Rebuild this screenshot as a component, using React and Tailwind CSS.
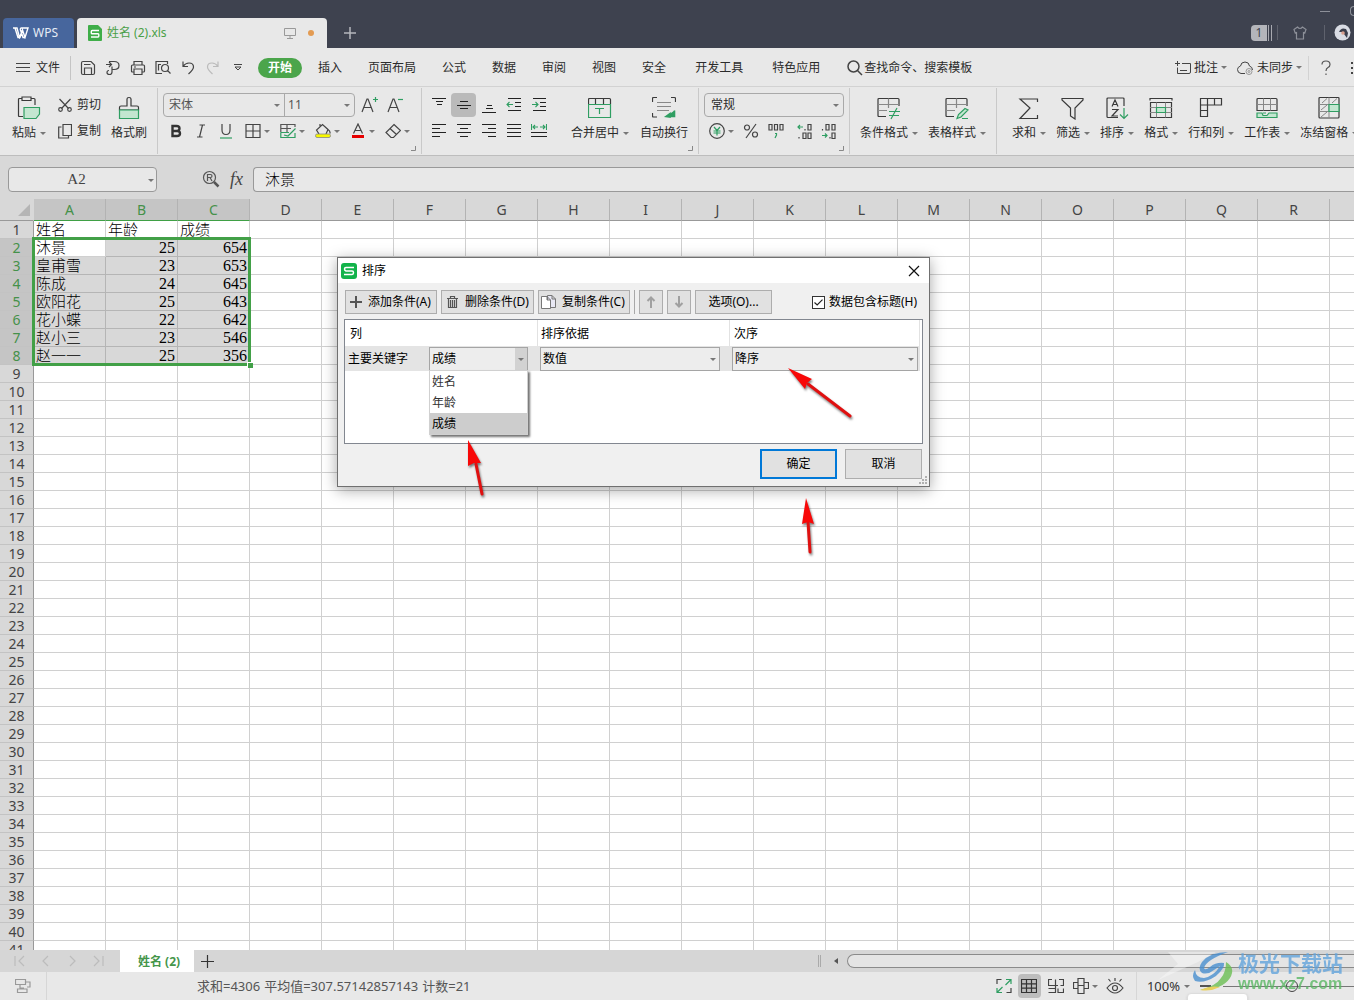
import React from 'react';

const COLUMNS = 'ABCDEFGHIJKLMNOPQR'.split('');
const ROWS = Array.from({ length: 41 }, (_, i) => i + 1);

const DATA = [
  ['姓名', '年龄', '成绩'],
  ['沐景', 25, 654],
  ['皇甫雪', 23, 653],
  ['陈成', 24, 645],
  ['欧阳花', 25, 643],
  ['花小蝶', 22, 642],
  ['赵小三', 23, 546],
  ['赵一一', 25, 356],
];

const GREEN = '#2f9e62';
const PALE = '#c3e6d0';

function Icon({ w = 16, h = 16, color = '#444', sw = 1.2, className, children }) {
  return (
    <svg
      width={w}
      height={h}
      viewBox={`0 0 ${w} ${h}`}
      fill="none"
      stroke={color}
      strokeWidth={sw}
      className={`shrink-0 ${className || ''}`}
      aria-hidden="true"
    >
      {children}
    </svg>
  );
}

function Caret({ className }) {
  return (
    <svg width="6" height="3" viewBox="0 0 6 3" className={`shrink-0 ${className || ''}`} aria-hidden="true">
      <path d="M0 0H6L3 3Z" fill="#777" />
    </svg>
  );
}

function IconButton({ label, className, children }) {
  return (
    <button aria-label={label} className={`flex h-6 w-[25px] shrink-0 items-center justify-center ${className || ''}`}>
      {children}
    </button>
  );
}

function CaretButton({ label, children }) {
  return (
    <button aria-label={label} className="flex h-6 shrink-0 items-center gap-[3px]">
      {children}
      <Caret />
    </button>
  );
}

function RibbonButton({ icon, label, caret = true }) {
  return (
    <button className="flex shrink-0 flex-col items-center gap-1 pt-2">
      {icon}
      <span className="flex h-[18px] items-center gap-1 whitespace-nowrap">
        {label}
        {caret && <Caret />}
      </span>
    </button>
  );
}

function RibbonGroup({ className, corner, children }) {
  return (
    <div className={`relative flex shrink-0 items-start border-r border-[#c9c9c9] ${className}`}>
      {children}
      {corner && (
        <Icon w={5} h={5} color="#888" sw={1} className="absolute right-[5px] bottom-[3px]">
          <path d="M4.5 0V4.5H0" />
        </Icon>
      )}
    </div>
  );
}

function Combo({ label, value, options, className, caretClass = 'right-1' }) {
  return (
    <div className={`relative ${className}`}>
      <select aria-label={label} defaultValue={value} className="h-full w-full appearance-none bg-transparent outline-none">
        {(options || [value]).map((o) => (
          <option key={o}>{o}</option>
        ))}
      </select>
      <Caret className={`pointer-events-none absolute top-1/2 -mt-px ${caretClass}`} />
    </div>
  );
}

/* ---------- title bar ---------- */

function TitleBar() {
  return (
    <header className="flex h-12 shrink-0 items-end overflow-hidden bg-[#3e424f] pl-[3px]">
      <button className="flex h-[30px] w-[71px] items-center gap-1 rounded-t bg-[#47669d] pl-[10px] text-[#e6ecf6]">
        <Icon w={16} h={12} color="#fff" sw={1.4}>
          <path d="M0 1H4L6.500 10.500L9 4.500M2 1L5 10.500H7L9.500 3L12 10.500L15 1H8.500Q7 1 7.500 3L10 10.500H12" />
        </Icon>
        WPS
      </button>
      <div className="ml-[3px] flex h-[30px] w-[250px] items-center rounded-t bg-[#e8e8e8] pr-[13px] pl-[11px]">
        <Icon w={14} h={16} color="#fff" sw={1.4}>
          <path d="M1 0H10L14 4V15Q14 16 13 16H1Q0 16 0 15V1Q0 0 1 0Z" fill="#3fae49" stroke="none" />
          <path d="M11 5.500H4.200Q3.300 5.500 3.300 6.500V8Q3.300 8.800 4.200 8.800H10Q10.800 8.800 10.800 9.700V11Q10.800 12 10 12H3" />
        </Icon>
        <span className="ml-[5px] text-[#4a9f47]">姓名 (2).xls</span>
        <Icon w={12} h={12} color="#999" sw={1} className="ml-auto">
          <path d="M.5 1.500H11.500V8.500H.5ZM6 8.500V11M3 11.500H9" />
        </Icon>
        <span className="ml-3 h-[6px] w-[6px] rounded-full bg-[#e39b52]" />
      </div>
      <button aria-label="新建标签" className="flex h-[30px] w-[46px] items-center justify-center">
        <Icon w={12} h={12} color="#b5b7bd" sw={1.5}>
          <path d="M6 0V12M0 6H12" />
        </Icon>
      </button>
      <div className="ml-auto flex h-12 flex-col justify-end">
        <div className="flex h-[14px] items-center justify-end gap-5">
          <button aria-label="最小化" className="h-px w-[10px] bg-[#8d9099]" />
          <button aria-label="最大化" className="h-[10px] w-1 rounded-l-sm border border-r-0 border-[#8d9099]" />
        </div>
        <div className="flex h-[30px] items-center pb-px">
          <span className="flex h-4 w-4 items-center justify-center rounded-l-sm bg-[#b4b5bb] text-[#3e424f]">1</span>
          <span className="ml-px h-4 w-[4px] border-x border-[#a8a9b0]" />
          <span className="ml-[5px] h-[15px] w-px bg-[#5f626d]" />
          <Icon w={14} h={14} color="#8d9099" className="ml-[15px]">
            <path d="M4.500 1L1 3.500L2.200 7L3.500 6.500V13H10.500V6.500L11.800 7L13 3.500L9.500 1Q7 4 4.500 1Z" />
          </Icon>
          <span className="ml-[17px] h-[15px] w-px bg-[#5f626d]" />
          <Icon w={17} h={17} className="ml-[9px]">
            <circle cx="8.500" cy="8.500" r="8" fill="#d9dce4" stroke="none" />
            <path d="M5 8Q7 3 12 5L14 9L13 14L10 10L8 8Z" fill="#3b3f4d" stroke="none" />
            <circle cx="9" cy="9" r="1.800" fill="#d9a08f" stroke="none" />
          </Icon>
          <span className="w-[3px]" />
        </div>
      </div>
    </header>
  );
}

/* ---------- menu bar ---------- */

const QUICK = [
  ['保存', <path d="M3 1.500H11L14.500 5V13Q14.500 14.500 13 14.500H3Q1.500 14.500 1.500 13V3Q1.500 1.500 3 1.500ZM4.500 14.500V8H11.500V14.500M4 4.500H10.500" />],
  ['输出为PDF', <path d="M1 4.500H6M4 2L6.500 4.500L4 7M4 1.500H9Q14 1.500 14 5.500T9 9.500H7V12Q7 14.500 4.500 14.500T2 12.500Q2 10.500 4 10.500M7 9.500V6.500" />],
  ['打印', <path d="M4 5V1.500H12V5M4 12H2.500Q1.500 12 1.500 11V6Q1.500 5 2.500 5H13.500Q14.500 5 14.500 6V11Q14.500 12 13.500 12H12M4 9H12V14.500H4ZM4 7H6" />],
  ['打印预览', <path d="M12.500 4V1.500H1V13.500H7M3.500 10.500V4.500H6M13.500 8A3.500 3.500 0 1 1 6.500 8A3.500 3.500 0 1 1 13.500 8ZM12.500 10.500L15.500 13.500" />],
  ['撤销', <path d="M3 1.500V6.500H8M3 6.500Q5.500 3 9 3Q13.500 3 13.500 7Q13.500 9.500 8.500 14" />],
];

const TABS = ['插入', '页面布局', '公式', '数据', '审阅', '视图', '安全'];
const MORE_TABS = ['开发工具', '特色应用'];

function MenuBar() {
  return (
    <div className="flex h-[38px] shrink-0 items-center overflow-hidden pt-px whitespace-nowrap">
      <button className="ml-4 flex items-center gap-[6px]">
        <Icon w={14} h={10} sw={1}>
          <path d="M0 .5H14M0 4.500H14M0 8.500H14" />
        </Icon>
        文件
      </button>
      <span className="mr-1 ml-[10px] h-6 w-px bg-[#c4c4c4]" />
      {QUICK.map(([label, shape]) => (
        <IconButton key={label} label={label}>
          <Icon>{shape}</Icon>
        </IconButton>
      ))}
      <IconButton label="恢复">
        <Icon color="#bbb">
          <path d="M13 1.500V6.500H8M13 6.500Q10.500 3 7 3Q2.500 3 2.500 7Q2.500 9.500 7.500 14" />
        </Icon>
      </IconButton>
      <IconButton label="自定义快速访问工具栏">
        <Icon w={8} h={7} sw={1}>
          <path d="M0 .5H8M1 3L4 6L7 3Z" />
        </Icon>
      </IconButton>
      <button className="ml-2 h-5 w-11 rounded-full bg-[#4ba54b] font-bold text-white">开始</button>
      <nav className="ml-4 flex gap-[26px]">
        {TABS.map((t) => (
          <button key={t}>{t}</button>
        ))}
      </nav>
      <nav className="ml-[29px] flex gap-[29px]">
        {MORE_TABS.map((t) => (
          <button key={t}>{t}</button>
        ))}
      </nav>
      <button className="ml-[27px] flex items-center gap-px">
        <Icon sw={1.5}>
          <circle cx="6.500" cy="6.500" r="5.500" />
          <path d="M10.500 10.500L15 15" />
        </Icon>
        查找命令、搜索模板
      </button>
      <div className="ml-auto flex items-center">
        <button className="flex items-center">
          <Icon sw={1} className="mr-[3px]">
            <path d="M7 3.500H15.500V12Q15.500 13.500 14 13.500H2.500V7.500M0 3.500H5M2.500 1V6M5 10.500H12" />
          </Icon>
          批注
          <Caret className="ml-[3px]" />
        </button>
        <button className="ml-[10px] flex items-center">
          <Icon sw={1} className="mr-1">
            <path d="M8 13.500H4Q.5 13 .5 9.500Q.5 7 3.500 6Q4 2 8 2Q12 2 12.500 6Q15.500 7 15.500 10" />
            <circle cx="12" cy="11.500" r="3" stroke="#999" />
            <circle cx="12" cy="11.500" r="1" stroke="#999" />
          </Icon>
          未同步
          <Caret className="ml-[3px]" />
        </button>
        <span className="ml-[6px] h-6 w-px bg-[#d2d2d2]" />
        <button aria-label="帮助" className="ml-3">
          <Icon w={10} h={16} color="#555">
            <path d="M1 4.500Q1 1 5 1T9 4.500Q9 6.500 7 7.500Q5 8.500 5 11M5 13.500V15" />
          </Icon>
        </button>
        <button aria-label="更多" className="ml-5">
          <Icon w={3} h={14} sw={2}>
            <path d="M0 2H2M0 7H2M0 12H2" />
          </Icon>
        </button>
      </div>
    </div>
  );
}

/* ---------- ribbon ---------- */

const big = (children) => (
  <Icon w={24} h={24} color="#3a3a3a">
    {children}
  </Icon>
);

const ALIGN_TOP = [
  ['顶端对齐', <path d="M1 1.500H15M5 4.500H12M6 7.500H11" />],
  ['垂直居中', <path d="M4 4.500H12M1 8.500H15M4 11.500H12" />],
  ['底端对齐', <path d="M6 8.500H11M5 11.500H12M1 15.500H15" />],
];

const ALIGN_BOTTOM = [
  ['左对齐', <path d="M1 1.500H15M1 5.500H9M1 9.500H15M1 13.500H9" />],
  ['居中', <path d="M1 1.500H15M4 5.500H12M1 9.500H15M4 13.500H12" />],
  ['右对齐', <path d="M1 1.500H15M7 5.500H15M1 9.500H15M7 13.500H15" />],
  ['两端对齐', <path d="M1 1.500H15M1 5.500H15M1 9.500H15M1 13.500H15" />],
];

const TOOLS = [
  ['求和', <path d="M20.500 6V3H3L13 12L3 22.500H20.500V19" />],
  ['筛选', <path d="M1 2.500H22V4L14 12V23L9.500 20V12L1 4Z" />],
  [
    '排序',
    <>
      <path d="M19 10V3Q19 2 18 2H3Q2 2 2 3V20.500Q2 21.500 3 21.500H13M7 10.500L10 4L13 10.500M8 8.500H12M7 13.500H13L7 20H13" />
      <path d="M19 12V22.500M15 18.500L19 22.500L23 18.500" stroke={GREEN} />
    </>,
  ],
  [
    '格式',
    <>
      <path d="M1 4.500V2.500H23V4.500M1.500 6.500H22.500V21.500H1.500Z" />
      <path d="M1 11.500H23M1 16.500H23M7.500 6.500V21.500M16.500 6.500V21.500" stroke="#888" strokeWidth="1" />
      <path d="M7.500 11.500H16.500V16.500H7.500Z" stroke={GREEN} fill={PALE} />
    </>,
  ],
  [
    '行和列',
    <>
      <path d="M1.500 2.500H22.500V9H8.500V20.500H1.500Z" />
      <path d="M8.500 2.500V9M15.500 2.500V9M1.500 9H8.500M1.500 14.500H8.500" />
    </>,
  ],
  [
    '工作表',
    <>
      <path d="M2 14.500V3.500Q2 2.500 3 2.500H21Q22 2.500 22 3.500V14.500Z" />
      <path d="M2 8.500H22M8.500 2.500V14.500M15.500 2.500V14.500" stroke="#888" strokeWidth="1" />
      <path d="M2 17V21.500H22V17H14L12 19.500H8L7 17ZM8 17H11" stroke={GREEN} fill={PALE} />
    </>,
  ],
  [
    '冻结窗格',
    <>
      <path d="M12 1.500H3Q2 1.500 2 2.500V21Q2 22 3 22H21Q22 22 22 21V2.500Q22 1.500 21 1.500Z" />
      <path d="M2 8.500H22M2 15.500H22M12 1.500V22M5 7L10 2.500M15 7L20 2.500M4 14L10 9M4 21L10 16" stroke="#888" strokeWidth="1" />
      <path d="M12 8.500H22V15.500H12Z" stroke={GREEN} fill={PALE} />
    </>,
  ],
];

function Ribbon() {
  return (
    <div className="flex h-[70px] shrink-0 overflow-hidden border-t border-b border-t-[#d2d2d2] border-b-[#bdbdbd] py-px">
      <RibbonGroup className="pr-[10px] pl-3">
        <RibbonButton
          label="粘贴"
          icon={big(
            <>
              <path d="M6 20.500H2.500Q1.500 20.500 1.500 19.500V3.500Q1.500 2.500 2.500 2.500H5M14 2.500H17Q18 2.500 18 3.500V9M5 1H14V4.500H5Z" />
              <path d="M7 11.500H22.500V18L19 22.500H7Z" stroke={GREEN} fill={PALE} />
            </>
          )}
        />
        <div className="ml-3 flex flex-col gap-[2px] pt-[5px]">
          <button className="flex h-6 items-center gap-[5px]">
            <Icon w={14} h={14}>
              <path d="M1.500 1L10.500 10.500M12.500 1L3.500 10.500" />
              <circle cx="2.500" cy="11.500" r="1.800" />
              <circle cx="11.500" cy="11.500" r="1.800" />
            </Icon>
            剪切
          </button>
          <button className="flex h-6 items-center gap-[5px]">
            <Icon w={14} h={16}>
              <path d="M5 1.500H13.500V12.500H5ZM3.500 4H.7V15H10.500V13" />
            </Icon>
            复制
          </button>
        </div>
        <div className="ml-[10px]">
          <RibbonButton
            label="格式刷"
            caret={false}
            icon={big(
              <>
                <path d="M10 10V3Q10 1.500 12 1.500T14 3V10H20Q21.500 10 21.500 11.500V14H2.500V11.500Q2.500 10 4 10Z" />
                <path d="M2.500 14H21.500V22.500H2.500Z" stroke={GREEN} fill={PALE} />
              </>
            )}
          />
        </div>
      </RibbonGroup>

      <RibbonGroup corner className="w-[264px] pt-[5px] pl-[5px]">
        <div className="flex flex-col gap-[2px]">
          <div className="flex items-center">
            <div className="flex h-6 w-48 rounded border border-[#a9a9a9] text-[#555]">
              <Combo label="字体" value="宋体" className="w-[121px] border-r border-[#a9a9a9] pl-[5px]" />
              <Combo label="字号" value="11" className="flex-1 pl-[3px]" />
            </div>
            <button aria-label="增大字号" className="ml-[6px]">
              <Icon w={18} h={18}>
                <path d="M1 16L6 3H7L12 16M3 11.500H10.500" />
                <path d="M14.500 1V6M12 3.500H17" stroke={GREEN} />
              </Icon>
            </button>
            <button aria-label="减小字号" className="ml-2">
              <Icon w={18} h={18}>
                <path d="M1 16L6 3H7L12 16M3 11.500H10.500" />
                <path d="M11 3.500H16" stroke={GREEN} />
              </Icon>
            </button>
          </div>
          <div className="flex items-center">
            <IconButton label="加粗">
              <Icon w={12} h={14} sw={2.4} color="#333">
                <path d="M2.500 2H6.500Q9.500 2 9.500 4.500T6.500 7H2.500ZM2.500 7H7Q10 7 10 9.500T7 12H2.500Z" />
              </Icon>
            </IconButton>
            <IconButton label="倾斜">
              <Icon w={10} h={14}>
                <path d="M3.500 1H9M1 13H6.500M6.500 1L3.500 13" />
              </Icon>
            </IconButton>
            <IconButton label="下划线">
              <Icon w={12} h={15}>
                <path d="M2 0V6Q2 10.500 6 10.500T10 6V0" />
                <path d="M0 14H12" stroke={GREEN} />
              </Icon>
            </IconButton>
            <div className="ml-[7px] flex gap-[10px]">
              <CaretButton label="边框">
                <Icon>
                  <path d="M1 1.500H15V14.500H1ZM8 1.500V14.500M1 8H15" />
                </Icon>
              </CaretButton>
              <CaretButton label="单元格样式">
                <Icon>
                  <path d="M.8 9V1.500H15V4M.8 5.500H11M7 1.500V9" stroke="#555" />
                  <path d="M.5 9.500H9M.8 9.500V14.500H15V10M4 12L8 13L15.500 5.500" stroke={GREEN} />
                </Icon>
              </CaretButton>
              <CaretButton label="填充颜色">
                <Icon>
                  <path d="M4 11L1.500 7L7.500 1.500L13 6.500L11 11M5 1V4M13 6.500Q15.500 8 15 10.500" />
                  <path d="M2 11H14Q15.500 11 15.500 12.700T14 14.500H2Q.5 14.500 .5 12.700T2 11Z" fill="#f8f800" stroke="#888" strokeWidth=".8" />
                </Icon>
              </CaretButton>
              <CaretButton label="字体颜色">
                <Icon>
                  <path d="M3.500 10.500L8 1L12.500 10.500M5 7.500H11" />
                  <path d="M2 13.500H14" stroke="#e60000" strokeWidth="3" />
                </Icon>
              </CaretButton>
              <CaretButton label="清除">
                <Icon>
                  <path d="M9 1.500L15.500 7.500L8.500 14.500H6L1 9.500ZM5 5.500L11.500 11.500" />
                </Icon>
              </CaretButton>
            </div>
          </div>
        </div>
      </RibbonGroup>

      <RibbonGroup corner className="w-[277px] pl-1">
        <div className="flex flex-col gap-[2px] pt-[5px]">
          <div className="flex">
            {ALIGN_TOP.map(([label, shape], i) => (
              <IconButton key={label} label={label} className={i === 1 ? 'rounded bg-[#bababa]' : ''}>
                <Icon sw={1.1} color="#222">{shape}</Icon>
              </IconButton>
            ))}
            <IconButton label="减少缩进量">
              <Icon color="#222" sw={1.1}>
                <path d="M2 1.500H15M9 5.500H15M9 9.500H15M2 13.500H15" />
                <path d="M7 7.500H1M3.500 5L1 7.500L3.500 10" stroke={GREEN} />
              </Icon>
            </IconButton>
            <IconButton label="增加缩进量">
              <Icon color="#222" sw={1.1}>
                <path d="M2 1.500H15M9 5.500H15M9 9.500H15M2 13.500H15" />
                <path d="M1 7.500H7M4.500 5L7 7.500L4.500 10" stroke={GREEN} />
              </Icon>
            </IconButton>
          </div>
          <div className="flex">
            {ALIGN_BOTTOM.map(([label, shape]) => (
              <IconButton key={label} label={label}>
                <Icon sw={1.1} color="#222">{shape}</Icon>
              </IconButton>
            ))}
            <IconButton label="分散对齐">
              <Icon color="#222" sw={1.1}>
                <path d="M0 9.500H16M0 13.500H16" />
                <path d="M.5 1V7M15.500 1V7M2 4H7M9 4H14M4 2L2 4L4 6M12 2L14 4L12 6" stroke={GREEN} />
              </Icon>
            </IconButton>
          </div>
        </div>
        <div className="ml-5 flex gap-[11px]">
          <RibbonButton
            label="合并居中"
            icon={big(
              <>
                <path d="M.5 8V3.500Q.5 2.500 1.500 2.500H21.500Q22.500 2.500 22.500 3.500V8M7.500 2.500V8M15.500 2.500V8" />
                <path d="M.5 8.500H22.500V21.500H.5ZM7 12.500H16M11.500 12.500V18" stroke={GREEN} />
              </>
            )}
          />
          <RibbonButton
            label="自动换行"
            caret={false}
            icon={big(
              <>
                <path d="M.5 6V2.500Q.5 1.500 1.500 1.500H5M19 1.500H22.500Q23.500 1.500 23.500 2.500V6M.5 17V20Q.5 21 1.500 21H5" />
                <path d="M5 6.500H19M5 10.500H19M5 14.500H17" stroke="#888" />
                <path d="M22.500 14.500V20.500H14M18 17.500V21L14 20.500Z" stroke={GREEN} fill={GREEN} strokeWidth="1.600" />
              </>
            )}
          />
        </div>
      </RibbonGroup>

      <RibbonGroup corner className="w-[151px] pt-[5px] pl-[5px]">
        <div className="flex flex-col gap-[2px]">
          <Combo label="数字格式" value="常规" className="h-6 w-[140px] rounded border border-[#a9a9a9] pl-[6px]" />
          <div className="flex items-center pl-[5px]">
            <CaretButton label="货币格式">
              <Icon>
                <circle cx="8" cy="8" r="7.300" />
                <path d="M5 4L8 7.500L11 4M8 7.500V12.500M4.500 8H11.500M4.500 10H11.500" stroke={GREEN} />
              </Icon>
            </CaretButton>
            <button aria-label="百分比" className="ml-[9px] w-4">
              <Icon>
                <circle cx="4" cy="4.500" r="2.500" />
                <circle cx="12" cy="11.500" r="2.500" />
                <path d="M13 1L3 15" />
              </Icon>
            </button>
            <button aria-label="千位分隔" className="ml-[9px] w-4">
              <Icon>
                <path d="M1 1.500H4V7H1ZM6.500 1.500H9.500V7H6.500ZM12 1.500H15V7H12Z" />
                <path d="M7 10.500H8.500V12L7 15" stroke={GREEN} />
              </Icon>
            </button>
            <button aria-label="增加小数位数" className="ml-[13px] w-4">
              <Icon>
                <path d="M11 1.500H14V7H11ZM6 10H9V15.500H6ZM11 10H14V15.500H11ZM8 6V7.500M2 14V15.500" />
                <path d="M6 4H1M3 2L1 4L3 6" stroke={GREEN} />
              </Icon>
            </button>
            <button aria-label="减少小数位数" className="ml-2 w-4">
              <Icon>
                <path d="M5 1.500H8V7H5ZM11 1.500H14V7H11ZM11 10H14V15.500H11ZM1.500 6V7.500M9 14V15.500" />
                <path d="M1 12.500H6M4 10.500L6 12.500L4 14.500" stroke={GREEN} />
              </Icon>
            </button>
          </div>
        </div>
      </RibbonGroup>

      <RibbonGroup className="gap-[10px] px-[10px]">
        <RibbonButton
          label="条件格式"
          icon={big(
            <>
              <path d="M9 20.500H2Q1 20.500 1 19.500V3.500Q1 2.500 2 2.500H21Q22 2.500 22 3.500V10" />
              <path d="M1 8.500H22M1 14.500H10M11.500 2.500V12" stroke="#888" />
              <path d="M12 15.500H23M12 19.500H22M20 12L14 23" stroke={GREEN} />
            </>
          )}
        />
        <RibbonButton
          label="表格样式"
          icon={big(
            <>
              <path d="M9 20.500H2Q1 20.500 1 19.500V3.500Q1 2.500 2 2.500H21Q22 2.500 22 3.500V10" />
              <path d="M1 8.500H22M1 14.500H10M11.500 2.500V12" stroke="#888" />
              <path d="M20 12.500L23 14L16 21L12 22.500L13.500 18.500ZM17 22.500H23" stroke={GREEN} fill={PALE} />
            </>
          )}
        />
      </RibbonGroup>

      <div className="flex items-start gap-[10px] pl-[15px]">
        {TOOLS.map(([label, shape]) => (
          <RibbonButton key={label} label={label} icon={big(shape)} />
        ))}
      </div>
    </div>
  );
}

/* ---------- formula bar ---------- */

function FormulaBar() {
  return (
    <div className="flex h-[43px] shrink-0 items-start bg-[#d8d8d8] pt-[11px] pl-2">
      <div className="relative">
        <input
          aria-label="名称框"
          defaultValue="A2"
          className="h-[25px] w-[149px] rounded border border-[#999] bg-[#e8e8e8] pr-3 text-center font-['Liberation_Serif','Noto_Sans_CJK_SC',serif] text-[15px] text-[#444] outline-none"
        />
        <Caret className="absolute top-3 right-[3px]" />
      </div>
      <button aria-label="查找" className="mt-[3px] ml-[45px]">
        <Icon w={18} h={18} color="#555">
          <circle cx="7.500" cy="7.500" r="6" />
          <path d="M12 12L16.500 16.500" strokeWidth="2.500" />
          <path d="M5.500 11V4.500H8.500Q10 4.500 10 6T8.500 7.500H5.500M8 7.500L10 11" />
        </Icon>
      </button>
      <button aria-label="插入函数" className="ml-[10px] font-['Liberation_Serif',serif] text-lg leading-6 text-[#444] italic">
        fx
      </button>
      <input
        aria-label="编辑栏"
        defaultValue="沐景"
        className="ml-[10px] h-[25px] min-w-0 flex-1 rounded-l border border-r-0 border-[#999] bg-[#e8e8e8] pb-[2px] pl-[11px] text-[15px] font-light text-black outline-none"
      />
    </div>
  );
}

/* ---------- sheet ---------- */

function columnHeadClass(i) {
  return i < 3 ? 'bg-[#c5c5c5] text-[#45914a] border-b-[#3fa045]' : 'text-[#444] border-b-[#999]';
}

function cellClass(row, col) {
  const selected = row >= 2 && row <= 8 && col < 3 && !(row === 2 && col === 0);
  return selected ? 'bg-[#d8d8d8] border-[#b5b5b5]' : 'border-[#d0d0d0]';
}

function Sheet() {
  return (
    <main className="relative min-h-0 flex-1 overflow-hidden bg-white">
      <table className="w-full min-w-max table-fixed border-separate border-spacing-0">
        <thead>
          <tr className="bg-[#d8d8d8] text-sm leading-5">
            <th className="h-[22px] w-[34px] border-r border-b border-r-[#d8d8d8] border-b-[#999] p-0 align-bottom">
              <Icon w={12} h={12} className="mb-1 ml-[18px]">
                <path d="M12 0V12H0Z" fill="#b5b5b5" stroke="none" />
              </Icon>
            </th>
            {COLUMNS.map((c, i) => (
              <th key={c} className={`h-[22px] w-[72px] border-r border-b border-r-[#b3b3b3] p-0 font-normal ${columnHeadClass(i)}`}>
                {c}
              </th>
            ))}
            <th className="border-b border-[#999] p-0" />
          </tr>
        </thead>
        <tbody>
          {ROWS.map((r) => (
            <tr key={r}>
              <th
                className={`h-[18px] border-r border-b border-r-[#999] border-b-[#c3c3c3] p-0 text-sm leading-[17px] font-normal ${
                  r >= 2 && r <= 8 ? 'bg-[#c5c5c5] text-[#45914a]' : 'bg-[#d8d8d8] text-[#444]'
                }`}
              >
                {r}
              </th>
              {COLUMNS.map((c, i) => {
                const value = DATA[r - 1]?.[i];
                return (
                  <td
                    key={c}
                    className={`h-[18px] border-r border-b p-0 whitespace-nowrap text-black ${cellClass(r, i)} ${
                      typeof value === 'number'
                        ? "pr-[2px] text-right font-['Liberation_Serif',serif] text-base leading-[17px]"
                        : 'pl-[2px] text-[15px] leading-[17px] font-light'
                    }`}
                  >
                    {value}
                  </td>
                );
              })}
              <td className="border-b border-[#d0d0d0] p-0" />
            </tr>
          ))}
        </tbody>
      </table>
      <div className="pointer-events-none absolute top-[38px] left-[32px] h-[129px] w-[219px] border-[3px] border-[#42a047]">
        <span className="absolute -right-[5px] -bottom-[5px] h-[6px] w-[6px] border-t border-l border-white bg-[#42a047]" />
      </div>
    </main>
  );
}

/* ---------- bottom bars ---------- */

const NAV = [
  ['第一张', 'M2 2V12M11 2L6 7L11 12'],
  ['上一张', 'M9 2L4 7L9 12'],
  ['下一张', 'M5 2L10 7L5 12'],
  ['最后一张', 'M3 2L8 7L3 12M12 2V12'],
];

function SheetTabs() {
  return (
    <div className="flex h-[22px] shrink-0 items-center bg-[#d6d6d6] pl-[13px]">
      <div className="flex w-[107px] gap-3">
        {NAV.map(([label, d]) => (
          <button key={label} aria-label={label}>
            <Icon w={14} h={14} color="#bcbcbc">
              <path d={d} />
            </Icon>
          </button>
        ))}
      </div>
      <button className="h-full w-[74px] bg-white pt-px pl-1 font-bold text-[#45964a]">姓名 (2)</button>
      <button aria-label="新建工作表" className="ml-[7px]">
        <Icon w={13} h={13} color="#333">
          <path d="M6.500 0V13M0 6.500H13" />
        </Icon>
      </button>
      <div className="ml-auto flex w-[536px] items-center">
        <span className="h-3 w-[3px] border-x border-[#aaa]" />
        <Icon w={4} h={6} className="ml-[13px]">
          <path d="M4 0V6L0 3Z" fill="#555" stroke="none" />
        </Icon>
        <span className="ml-[9px] h-[14px] flex-1 rounded-l-full border border-r-0 border-[#8a8a8a] bg-[#e4e4e4]" />
      </div>
    </div>
  );
}

function StatusBar() {
  return (
    <footer className="relative flex h-7 shrink-0 items-center overflow-hidden text-[#555]">
      <Icon color="#999" className="ml-[15px]">
        <path d="M.5 1.500H10.500V6.500H.5ZM10.500 4H15V9H12M5 6.500V10H9M2.500 14.500V11H12V14.500Z" />
      </Icon>
      <span className="ml-[15px] h-full w-px bg-[#d6d6d6]" />
      <p className="ml-[150px] flex gap-1 pt-px text-[13px] whitespace-nowrap">
        <span>求和=4306</span>
        <span>平均值=307.57142857143</span>
        <span>计数=21</span>
      </p>
      <div className="ml-auto flex items-center">
        <button aria-label="全屏显示" className="mr-[6px]">
          <Icon>
            <path d="M1 6V1.500H5.500M10.500 14.500H15V10" />
            <path d="M10 1.500H15V6M15 1.500L9.500 7M6 14.500H1V10M1 14.500L6.500 9" stroke={GREEN} />
          </Icon>
        </button>
        <button aria-label="普通视图" className="flex h-6 w-[23px] items-center justify-center rounded-sm bg-[#bdbdbd]">
          <Icon color="#333">
            <path d="M.5 1.500H15.500V14.500H.5ZM.5 5.800H15.500M.5 10.200H15.500M5.500 1.500V14.500M10.500 1.500V14.500" />
          </Icon>
        </button>
        <button aria-label="分页预览" className="ml-[7px]">
          <Icon>
            <path d="M4 1.500H.5V7.500H10M7.500 1.500V10M11 1.500H15.500V7.500H12.500M.5 10.500H7.500V14.500H.5M10 10.500V14.500H15.500V10.500" />
          </Icon>
        </button>
        <button aria-label="页面布局" className="ml-[9px] flex items-center gap-[3px]">
          <Icon>
            <path d="M5 .5H11V15.500H5ZM5 4.500H.5V10.500H5M11 4.500H15.500V10.500H11M5 7.500H11" />
          </Icon>
          <Caret />
        </button>
        <button aria-label="护眼模式" className="ml-2">
          <Icon w={18} h={18}>
            <path d="M1 11Q5 6 9 6T17 11Q13 16 9 16T1 11ZM9 1V4M2.500 2L4.500 4.500M15.500 2L13.500 4.500" />
            <circle cx="9" cy="11" r="2.500" />
          </Icon>
        </button>
        <span className="mr-[10px] ml-3 h-7 w-px bg-[#d6d6d6]" />
        <button className="flex items-center gap-1 pt-px text-[13px] text-[#333]">
          100%
          <Caret />
        </button>
        <button aria-label="缩小" className="mr-3 ml-[10px] h-[2px] w-[11px] bg-[#555]" />
        <input
          type="range"
          aria-label="显示比例"
          defaultValue={53}
          className="h-3 w-[131px] appearance-none bg-transparent [&::-webkit-slider-runnable-track]:h-px [&::-webkit-slider-runnable-track]:bg-[#777] [&::-webkit-slider-thumb]:-mt-[6px] [&::-webkit-slider-thumb]:h-3 [&::-webkit-slider-thumb]:w-3 [&::-webkit-slider-thumb]:appearance-none [&::-webkit-slider-thumb]:rounded-full [&::-webkit-slider-thumb]:border [&::-webkit-slider-thumb]:border-[#444]"
        />
      </div>
      <div className="absolute right-[106px] -bottom-2 h-[15px] w-[61px] rounded border border-[#ddd] bg-white shadow" />
    </footer>
  );
}

/* ---------- sort dialog ---------- */

function DialogButton({ className, children, ...rest }) {
  return (
    <button className={`flex h-6 items-center border border-[#adadad] bg-[#e1e1e1] whitespace-nowrap ${className}`} {...rest}>
      {children}
    </button>
  );
}

function SortDialog() {
  return (
    <div
      role="dialog"
      aria-label="排序"
      className="absolute top-[257px] left-[337px] h-[230px] w-[593px] border border-[#707070] bg-[#f0f0f0] text-black shadow-[0_3px_14px_rgba(0,0,0,0.35)]"
    >
      <div className="flex h-[25px] items-center bg-white pr-[9px] pl-[3px]">
        <Icon w={16} h={16} color="#fff" sw={1.5}>
          <rect width="16" height="16" rx="3" fill="#12b34a" stroke="none" />
          <path d="M13 4.500H5Q3.500 4.500 3.500 6T5 8H11Q12.500 8 12.500 9.700T11 11.500H3" />
        </Icon>
        <span className="ml-[5px]">排序</span>
        <button aria-label="关闭" className="ml-auto">
          <Icon w={12} h={12} color="#111">
            <path d="M1 1L11 11M11 1L1 11" />
          </Icon>
        </button>
      </div>

      <div className="mt-[7px] flex gap-1 pr-3 pl-[7px]">
        <DialogButton className="w-[92px] gap-[6px] pl-1">
          <Icon w={12} h={12} sw={2} color="#555">
            <path d="M6 0V12M0 6H12" />
          </Icon>
          添加条件(A)
        </DialogButton>
        <DialogButton className="w-[93px] gap-[7px] pl-[5px]">
          <Icon w={11} h={12} color="#555">
            <path d="M0 2.500H11M3.500 2V.5H7.500V2M1.500 3V11.500H9.500V3M3.500 4V11M5.500 4V11M7.500 4V11" />
          </Icon>
          删除条件(D)
        </DialogButton>
        <DialogButton className="w-[92px] gap-[6px] pl-[2px]">
          <Icon w={15} h={14} color="#777" sw={1}>
            <path d="M6.500 12.500V.5H11L14.500 4V12.500ZM11 .5V4H14.500" fill="#e8e8f4" />
            <path d="M.5 13.500V1.500H6L9.500 5V13.500ZM6 1.500V5H9.500" fill="#fff" />
          </Icon>
          复制条件(C)
        </DialogButton>
        <span className="h-6 w-px bg-[#a8a8a8]" />
        <DialogButton disabled aria-label="上移" className="w-6 justify-center bg-[#cccccc]">
          <Icon w={10} h={12} color="#a0a0a0" sw={2}>
            <path d="M5 1V12M1.500 5L5 1.500L8.500 5" />
          </Icon>
        </DialogButton>
        <DialogButton disabled aria-label="下移" className="w-6 justify-center bg-[#cccccc]">
          <Icon w={10} h={12} color="#a0a0a0" sw={2}>
            <path d="M5 0V11M1.500 7L5 10.500L8.500 7" />
          </Icon>
        </DialogButton>
        <DialogButton className="w-[77px] justify-center">选项(O)...</DialogButton>
        <label className="ml-auto flex items-center gap-1">
          <span className="relative">
            <input type="checkbox" defaultChecked className="block h-[13px] w-[13px] appearance-none border border-[#333] bg-white" />
            <Icon w={9} h={7} color="#222" className="pointer-events-none absolute top-[3px] left-[2px]">
              <path d="M.5 3.500L3.200 6L8.500 .7" />
            </Icon>
          </span>
          数据包含标题(H)
        </label>
      </div>

      <div className="mx-[6px] mt-[5px] h-[125px] border border-[#828790] bg-white pr-[2px]">
        <table className="w-full table-fixed border-separate border-spacing-0">
          <thead>
            <tr className="h-[26px] text-left">
              <th className="w-[193px] border-r border-[#e2e2e2] p-0 pt-px pl-[5px] font-normal">列</th>
              <th className="w-[192px] border-r border-[#e2e2e2] p-0 pt-px pl-[3px] font-normal">排序依据</th>
              <th className="border-r border-[#e2e2e2] p-0 pt-px pl-1 font-normal">次序</th>
            </tr>
          </thead>
          <tbody>
            <tr className="h-[25px] bg-[#e4e4e4]">
              <td className="p-0">
                <div className="flex items-center justify-between pr-[10px] pl-[3px]">
                  <span>主要关键字</span>
                  <div className="relative">
                    <Combo
                      label="主要关键字"
                      value="成绩"
                      options={['姓名', '年龄', '成绩']}
                      className="h-6 w-[99px] border border-[#a5a5a5] bg-[linear-gradient(to_left,#d2d2d2_12px,#ededed_12px)] pl-[2px]"
                      caretClass="right-[3px]"
                    />
                    <ul role="listbox" className="absolute top-[23px] left-0 w-[99px] border border-[#d0d0d0] bg-white text-[#333] shadow-[2px_2px_2px_rgba(0,0,0,0.55)]">
                      <li role="option" className="h-[21px] pl-[2px] leading-[21px]">姓名</li>
                      <li role="option" className="h-[21px] pl-[2px] leading-[21px]">年龄</li>
                      <li role="option" aria-selected="true" className="h-[21px] bg-[#cdcdcd] pl-[2px] leading-[21px] text-black">成绩</li>
                    </ul>
                  </div>
                </div>
              </td>
              <td className="p-0 pr-[10px] pl-[2px]">
                <Combo label="排序依据" value="数值" className="h-6 border border-[#a5a5a5] bg-[#ededed] pl-[2px]" caretClass="right-[3px]" />
              </td>
              <td className="p-0 pr-[2px] pl-[2px]">
                <Combo label="次序" value="降序" className="h-6 border border-[#a5a5a5] bg-[#ededed] pl-[2px]" caretClass="right-[3px]" />
              </td>
            </tr>
          </tbody>
        </table>
      </div>

      <div className="mt-[5px] flex justify-end gap-2 pr-[7px]">
        <button className="h-[30px] w-[77px] border-2 border-[#0078d7] bg-[#e1e1e1]">确定</button>
        <button className="h-[30px] w-[77px] border border-[#adadad] bg-[#e1e1e1]">取消</button>
      </div>
      <svg width="8" height="8" viewBox="0 0 8 8" className="absolute right-[2px] bottom-[2px]" fill="#b0b0b0" aria-hidden="true">
        <path d="M6 0h2v2h-2zM3 3h2v2h-2zM6 3h2v2h-2zM0 6h2v2h-2zM3 6h2v2h-2zM6 6h2v2h-2z" />
      </svg>
    </div>
  );
}

/* ---------- annotations ---------- */

function Arrow({ className, head, line }) {
  return (
    <svg className={`pointer-events-none absolute overflow-visible drop-shadow-[1px_2px_1px_rgba(0,0,0,0.5)] ${className}`} aria-hidden="true">
      <path d={line} stroke="#e01010" strokeWidth="3" strokeLinecap="round" fill="none" />
      <path d={head} fill="#f80808" />
    </svg>
  );
}

function Watermark() {
  return (
    <div className="pointer-events-none absolute right-[11px] bottom-[6px] flex items-center gap-[2px] opacity-80">
      <svg width="44" height="42" viewBox="0 0 44 42" className="shrink-0 overflow-visible" aria-hidden="true">
        <path d="M-34 28L-14 12L-24 0H24L6 10Z" fill="#fff" opacity=".45" />
        <path d="M36 0Q18 0 10 10Q5 17 10 21Q16 23 22 18L28 14Q22 24 12 26Q4 26 3 18Q-1 24 3 29Q12 32 24 24Q33 16 32 11Q24 10 18 15Q13 19 12 16Q14 8 36 0Z" fill="#4a90d0" />
        <path d="M34 10Q44 16 38 26Q30 38 8 38Q24 34 29 26Q34 20 34 10Z" fill="#6cbf54" />
        <path d="M8 38Q18 33 28 35Q18 40 8 38Z" fill="#e8c93a" />
      </svg>
      <div className="leading-none whitespace-nowrap">
        <p className="text-[21px] leading-[22px] font-bold text-[#62a4dc]">极光下载站</p>
        <p className="font-['Liberation_Sans',sans-serif] text-base leading-5 font-bold text-[#5cb865]">www.xz7.com</p>
      </div>
    </div>
  );
}

export default function App() {
  return (
    <div className="relative flex h-screen flex-col overflow-hidden bg-[#e8e8e8] font-['Noto_Sans','Noto_Sans_CJK_SC',sans-serif] text-xs text-[#2b2b2b]">
      <TitleBar />
      <MenuBar />
      <Ribbon />
      <FormulaBar />
      <Sheet />
      <SheetTabs />
      <StatusBar />
      <SortDialog />
      <Arrow className="top-[440px] left-[468px] h-14 w-4" line="M8 24L14 54" head="M0 0L13 23L6 23L0 26Z" />
      <Arrow className="top-[368px] left-[788px] h-12 w-16" line="M20 16L62 48" head="M0 0L24 11L19 15L17 21Z" />
      <Arrow className="top-[498px] left-[802px] h-14 w-3" line="M6 24L8 54" head="M4 0L12 26L6 24L0 26Z" />
      <Watermark />
    </div>
  );
}
